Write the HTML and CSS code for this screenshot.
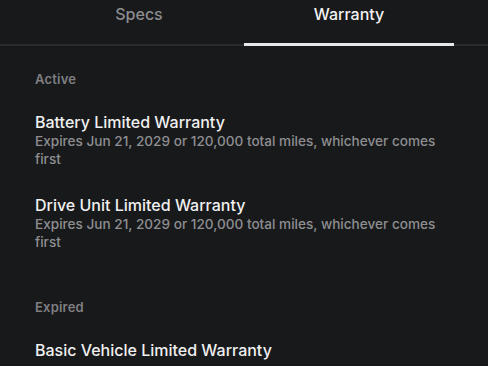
FILE: index.html
```html
<!DOCTYPE html>
<html lang="en">
<head>
  <meta charset="UTF-8" />
  <meta name="viewport" content="width=device-width, initial-scale=1.0"/>
  <title>Warranty</title>
  <link rel="stylesheet" href="styles.css">
</head>
<body>
  <div class="tabs">
    <div class="tab">Specs</div>
    <div class="tab active">Warranty</div>
  </div>

  <div class="content">
    <!-- Active warranties -->
    <div class="group">
      <div class="group-label">Active</div>
      <div class="item">
        <div class="item-title">Battery Limited Warranty</div>
        <div class="item-desc">Expires Jun 21, 2029 or 120,000 total miles, whichever comes first</div>
      </div>
      <div class="item">
        <div class="item-title">Drive Unit Limited Warranty</div>
        <div class="item-desc">Expires Jun 21, 2029 or 120,000 total miles, whichever comes first</div>
      </div>
    </div>

    <!-- Expired warranties -->
    <div class="group">
      <div class="group-label">Expired</div>
      <div class="item">
        <div class="item-title">Basic Vehicle Limited Warranty</div>
      </div>
    </div>
  </div>
</body>
</html>
```

FILE: styles.css
```css
body {
  font-family: Inter, "Noto Sans", sans-serif;
  margin: 0;
  background: #18191b;
  color: #ececec;
  overflow: hidden;
}

.tabs {
  display: flex;
  padding: 0 34px;
  border-bottom: 2px solid #2a2b2e;
}

.tab {
  flex: 1;
  text-align: center;
  font-size: 16px;
  font-weight: 500;
  line-height: 28px;
  height: 43px;
  color: #8c8c8f;
}

.tab.active {
  color: #f2f2f2;
  border-bottom: 3px solid #e8e8e8;
  margin-bottom: -2px;
}

.content {
  padding: 0 35px;
}

.group {
  padding-top: 24px;
  padding-bottom: 23px;
}

.group-label {
  font-size: 13px;
  font-weight: 600;
  letter-spacing: 0.2px;
  color: #7f7f82;
  line-height: 18px;
  margin-bottom: 24px;
}

.item {
  margin-bottom: 27px;
}

.item:last-child {
  margin-bottom: 0;
}

.item-title {
  font-size: 16px;
  font-weight: 500;
  line-height: 20px;
  color: #f0f0f0;
}

.item-desc {
  font-size: 13.6px;
  font-weight: 500;
  line-height: 18px;
  color: #8e8e91;
}
```
